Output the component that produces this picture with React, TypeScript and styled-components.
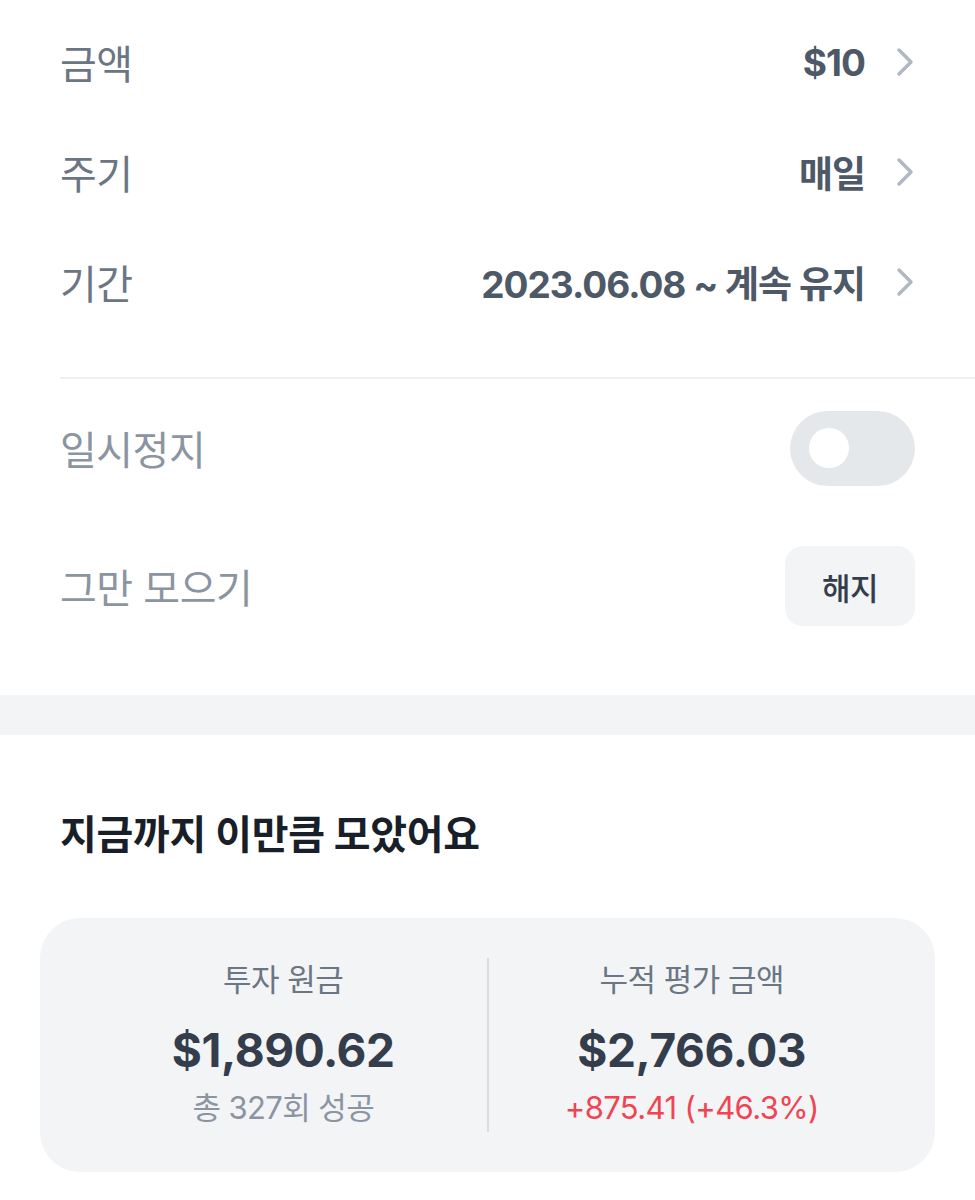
import React from 'react'
import styled, { createGlobalStyle } from 'styled-components'

const GlobalStyle = createGlobalStyle`
  body {
    margin: 0;
    background: #ffffff;
    font-family: Inter, "Noto Sans CJK KR", sans-serif;
    -webkit-font-smoothing: antialiased;
  }
`

const Page = styled.div`
  width: 975px;
  background: #ffffff;
`

const SettingsSection = styled.section`
  padding: 7px 0 40px 60px;
`

const InfoRow = styled.div<{ $height: number }>`
  height: ${(p) => p.$height}px;
  display: flex;
  align-items: center;
  justify-content: space-between;
  padding-right: 60px;
`

const Label = styled.span<{ $muted?: boolean }>`
  font-size: 40px;
  color: ${(p) => (p.$muted ? '#8b95a1' : '#6b7684')};
  letter-spacing: -0.5px;
`

const ValueGroup = styled.div`
  display: flex;
  align-items: center;
  gap: 30px;
`

const Value = styled.span`
  font-size: 37px;
  font-weight: 700;
  color: #4e5968;
  letter-spacing: -1px;
`

const Divider = styled.div`
  height: 2px;
  margin-top: 40px;
  background: #eef0f2;
`

const Toggle = styled.div`
  width: 125px;
  height: 75px;
  border-radius: 38px;
  background: #e5e8eb;
  display: flex;
  align-items: center;
  padding-left: 19px;
  box-sizing: border-box;
`

const Knob = styled.div`
  width: 40px;
  height: 40px;
  border-radius: 50%;
  background: #ffffff;
`

const GhostButton = styled.button`
  width: 130px;
  height: 80px;
  border: none;
  border-radius: 18px;
  background: #f2f4f6;
  color: #333d4b;
  font-family: inherit;
  font-size: 31px;
  font-weight: 500;
  letter-spacing: -0.5px;
`

const Band = styled.div`
  height: 40px;
  background: #f2f4f6;
`

const SummarySection = styled.section`
  padding: 75px 40px 0 40px;
`

const Heading = styled.h2`
  margin: 0 0 58px 20px;
  font-size: 40px;
  line-height: 50px;
  font-weight: 700;
  color: #191f28;
  letter-spacing: -0.3px;
`

const Card = styled.div`
  height: 254px;
  box-sizing: border-box;
  border-radius: 40px;
  background: #f2f4f6;
  padding: 40px;
  display: grid;
  grid-template-columns: 1fr 2px 1fr;
`

const CardDivider = styled.div`
  background: #d9dde2;
`

const Stat = styled.div`
  display: flex;
  flex-direction: column;
  align-items: center;
`

const StatLabel = styled.div`
  font-size: 31px;
  line-height: 44px;
  color: #6b7684;
  letter-spacing: -0.5px;
`

const StatAmount = styled.div`
  margin-top: 20px;
  font-size: 46px;
  line-height: 56px;
  font-weight: 700;
  color: #333d4b;
  letter-spacing: -0.4px;
`

const StatSub = styled.div<{ $tone?: 'red' }>`
  margin-top: 10px;
  font-size: 31px;
  line-height: 40px;
  color: ${(p) => (p.$tone === 'red' ? '#f04452' : '#8b95a1')};
  letter-spacing: -0.6px;
`

function Chevron() {
  return (
    <svg width="20" height="30" viewBox="0 0 20 30" fill="none">
      <path d="M4 3 L16 15 L4 27" stroke="#b0b8c1" strokeWidth="3.5" strokeLinecap="round" strokeLinejoin="round" />
    </svg>
  )
}

const rows = [
  { label: '금액', value: '$10' },
  { label: '주기', value: '매일' },
  { label: '기간', value: '2023.06.08 ~ 계속 유지' },
]

export default function App() {
  return (
    <Page>
      <GlobalStyle />
      <SettingsSection>
        {rows.map((row) => (
          <InfoRow $height={110} key={row.label}>
            <Label>{row.label}</Label>
            <ValueGroup>
              <Value>{row.value}</Value>
              <Chevron />
            </ValueGroup>
          </InfoRow>
        ))}
        <Divider />
        <InfoRow $height={138}>
          <Label $muted>일시정지</Label>
          <Toggle>
            <Knob />
          </Toggle>
        </InfoRow>
        <InfoRow $height={138}>
          <Label $muted>그만 모으기</Label>
          <GhostButton>해지</GhostButton>
        </InfoRow>
      </SettingsSection>

      <Band />

      <SummarySection>
        <Heading>지금까지 이만큼 모았어요</Heading>
        <Card>
          <Stat>
            <StatLabel>투자 원금</StatLabel>
            <StatAmount>$1,890.62</StatAmount>
            <StatSub>총 327회 성공</StatSub>
          </Stat>
          <CardDivider />
          <Stat>
            <StatLabel>누적 평가 금액</StatLabel>
            <StatAmount>$2,766.03</StatAmount>
            <StatSub $tone="red">+875.41 (+46.3%)</StatSub>
          </Stat>
        </Card>
      </SummarySection>
    </Page>
  )
}
